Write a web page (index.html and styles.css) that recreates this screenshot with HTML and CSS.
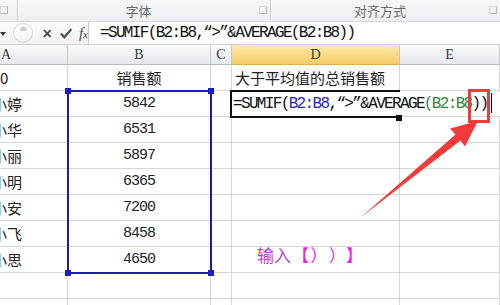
FILE: index.html
```html
<!DOCTYPE html>
<html lang="zh-CN">
<head>
  <meta charset="UTF-8" />
  <title>SUMIF</title>
  <link rel="stylesheet" href="styles.css">
</head>
<body>
  <div class="page">
    <div class="ribbon">
      <div class="grp grp-first"><span class="launch"></span></div>
      <div class="grp grp-font"><span class="grp-label">字体</span><span class="launch"></span></div>
      <div class="grp grp-align"><span class="grp-label">对齐方式</span><span class="launch"></span></div>
    </div>

    <div class="fbar">
      <div class="fbar-tools">
        <span class="nb-arrow"></span>
        <span class="grip"><span class="grip-dot"></span></span>
        <svg class="tool-x" width="9" height="9" viewBox="0 0 9 9"><path d="M1 1 L8 8 M8 1 L1 8" stroke="#4a4a4a" stroke-width="2"/></svg>
        <svg class="tool-ok" width="13" height="11" viewBox="0 0 13 11"><path d="M1 5.5 L4.5 9.5 L12 1" fill="none" stroke="#4a4a4a" stroke-width="2.2"/></svg>
        <span class="fx">f<i>x</i></span>
      </div>
      <div class="fbar-input">=SUMIF(B2:B8,“&gt;”&amp;AVERAGE(B2:B8))</div>
    </div>

    <div class="sheet">
      <div class="row hdr">
        <div class="c ca">A</div><div class="c cb">B</div><div class="c cc">C</div><div class="c cd on">D</div><div class="c ce">E</div>
      </div>
      <div class="row">
        <div class="c ca">0</div><div class="c cb">销售额</div><div class="c cc"></div><div class="c cd txt">大于平均值的总销售额</div><div class="c ce"></div>
      </div>
      <div class="row">
        <div class="c ca name">小婷</div><div class="c cb num">5842</div><div class="c cc"></div><div class="c cd"></div><div class="c ce"></div>
      </div>
      <div class="row">
        <div class="c ca name">小华</div><div class="c cb num">6531</div><div class="c cc"></div><div class="c cd"></div><div class="c ce"></div>
      </div>
      <div class="row">
        <div class="c ca name">小丽</div><div class="c cb num">5897</div><div class="c cc"></div><div class="c cd"></div><div class="c ce"></div>
      </div>
      <div class="row">
        <div class="c ca name">小明</div><div class="c cb num">6365</div><div class="c cc"></div><div class="c cd"></div><div class="c ce"></div>
      </div>
      <div class="row">
        <div class="c ca name">小安</div><div class="c cb num">7200</div><div class="c cc"></div><div class="c cd"></div><div class="c ce"></div>
      </div>
      <div class="row">
        <div class="c ca name">小飞</div><div class="c cb num">8458</div><div class="c cc"></div><div class="c cd"></div><div class="c ce"></div>
      </div>
      <div class="row">
        <div class="c ca name">小思</div><div class="c cb num">4650</div><div class="c cc"></div><div class="c cd"></div><div class="c ce"></div>
      </div>
      <div class="row">
        <div class="c ca"></div><div class="c cb"></div><div class="c cc"></div><div class="c cd"></div><div class="c ce"></div>
      </div>
      <div class="row">
        <div class="c ca"></div><div class="c cb"></div><div class="c cc"></div><div class="c cd"></div><div class="c ce"></div>
      </div>

      <!-- selection over B2:B8 -->
      <div class="range">
        <span class="hd hd-tl"></span><span class="hd hd-tr"></span>
        <span class="hd hd-bl"></span><span class="hd hd-br"></span>
      </div>

      <!-- active cell D2 in edit mode -->
      <div class="active"></div>
      <div class="editor">=SUMIF(<span class="ref1">B2:B8</span>,“&gt;”&amp;AVERAGE<span class="ref2">(B2:B8</span>))<span class="caret"></span></div>
      <span class="fill"></span>

      <div class="mark"></div>
      <div class="note">输入<span class="br br-open">【</span><span class="br br-p1">）</span><span class="br br-p2">）</span><span class="br br-close">】</span></div>
    </div>

    <svg class="arrow" width="500" height="305" viewBox="0 0 500 305">
      <polygon points="360,218 455.5,134.5 450,128.5 478,121 465,146.5 460.5,140.5" fill="#f23a3a"/>
    </svg>
  </div>
</body>
</html>
```

FILE: styles.css
```css
body {
  margin: 0;
  background: #fff;
  font-family: "Noto Sans CJK SC", sans-serif;
  color: #222;
}
.page {
  position: relative;
  width: 500px;
  height: 305px;
  overflow: hidden;
}

/* ribbon group labels */
.ribbon {
  display: flex;
  height: 21px;
  background: linear-gradient(#f7f8fa, #eceef1);
  border-bottom: 1px solid #d5d9de;
}
.grp {
  display: flex;
  align-items: flex-start;
  border-right: 1px solid #c8ccd2;
  box-shadow: 1px 0 0 #fff;
}
.grp-first { width: 17px; }
.grp-font { width: 252px; }
.grp-align { flex: 1; border-right: none; box-shadow: none; }
.grp-label {
  flex: 1;
  text-align: center;
  font-size: 13px;
  line-height: 21px;
  color: #6a6a6a;
}
.launch {
  width: 6px;
  height: 6px;
  margin: 6px 3px 0 0;
  border: 1px solid #b4b8be;
  border-left-color: #d4d7db;
  border-top-color: #d4d7db;
  flex: none;
}

/* formula bar */
.fbar {
  display: flex;
  height: 22px;
  border-bottom: 1px solid #cdd1d6;
  background: #fff;
}
.fbar-tools {
  width: 88px;
  display: flex;
  align-items: center;
  background: linear-gradient(#fbfbfc, #f1f2f4);
}
.nb-arrow {
  width: 0;
  height: 0;
  border-left: 3px solid transparent;
  border-right: 3px solid transparent;
  border-top: 4px solid #333;
  margin: 1px 0 0 0;
}
.grip {
  width: 19px;
  height: 18px;
  margin-left: 7px;
  border-radius: 50%;
  border: 1px solid #d9dce0;
  background: linear-gradient(#ffffff, #eef0f2);
  display: flex;
  justify-content: center;
}
.grip-dot {
  width: 7px;
  height: 4px;
  margin-top: 3px;
  border-radius: 50%;
  background: #c9ccd1;
}
.tool-x { margin-left: 10px; }
.tool-ok { margin-left: 8px; }
.fx {
  margin-left: 7px;
  font-family: "Liberation Serif", serif;
  font-style: italic;
  font-size: 15px;
  color: #4a4a4a;
}
.fx i { font-size: 11px; }
.fbar-input {
  flex: 1;
  border-left: 1px solid #c6cad0;
  padding-left: 11px;
  font-family: "Liberation Mono", monospace;
  font-size: 16px;
  letter-spacing: -1.65px;
  line-height: 22px;
  color: #111;
  white-space: nowrap;
}

/* sheet */
.sheet {
  position: relative;
}
.row {
  display: grid;
  grid-template-columns: 68px 143px 21px 168px 100px;
  height: 26px;
}
.c {
  box-sizing: border-box;
  border-right: 1px solid #d6d6d6;
  border-bottom: 1px solid #d6d6d6;
  font-size: 15px;
  line-height: 25px;
  text-align: center;
  white-space: nowrap;
  overflow: hidden;
}
.ca { text-align: left; }
.name { text-indent: -8px; }
.num {
  font-family: "Liberation Mono", monospace;
  letter-spacing: -1px;
}
.txt {
  text-align: left;
  padding-left: 3px;
  overflow: visible;
}

.hdr { height: 20px; }
.hdr .c {
  font-family: "Liberation Serif", serif;
  font-size: 14px;
  line-height: 19px;
  color: #3a3a3a;
  background: linear-gradient(#f9fafb, #e6e9ed);
  border-right-color: #c5c9ce;
  border-bottom-color: #b9bdc3;
}
.hdr .ca { padding-left: 1px; }
.hdr .on {
  background: linear-gradient(#fde8aa, #f6cd66);
  border-bottom-color: #e0b04a;
}

/* overlays */
.range {
  position: absolute;
  left: 67px;
  top: 45px;
  width: 141px;
  height: 180px;
  border: 2px solid #1c1cb4;
}
.hd {
  position: absolute;
  width: 6px;
  height: 6px;
  background: #1c1cc8;
}
.hd-tl { left: -4px; top: -4px; }
.hd-tr { right: -4px; top: -4px; }
.hd-bl { left: -4px; bottom: -4px; }
.hd-br { right: -4px; bottom: -4px; }

.active {
  position: absolute;
  left: 230px;
  top: 45px;
  width: 166px;
  height: 24px;
  border: 2px solid #111;
}
.editor {
  position: absolute;
  left: 232px;
  top: 47px;
  width: 267px;
  height: 24px;
  background: #fff;
  padding-left: 1px;
  font-family: "Liberation Mono", monospace;
  font-size: 16px;
  letter-spacing: -1.65px;
  line-height: 24px;
  color: #111;
  white-space: nowrap;
}
.ref1 { color: #2a2ab8; }
.ref2 { color: #2f8a3c; }
.caret {
  display: inline-block;
  width: 1px;
  height: 20px;
  margin-left: 4px;
  vertical-align: -5px;
  background: #111;
}
.fill {
  position: absolute;
  left: 396px;
  top: 70px;
  width: 6px;
  height: 6px;
  background: #111;
}
.mark {
  position: absolute;
  left: 468px;
  top: 44px;
  width: 16px;
  height: 28px;
  border: 3px solid #ef3b3b;
}
.note {
  position: absolute;
  left: 257px;
  top: 199px;
  display: flex;
  font-size: 17px;
  line-height: 22px;
  color: #c23dcc;
  white-space: nowrap;
}
.br {
  display: inline-block;
  color: #f01ef0;
}
.br-open { width: 18px; text-align: right; }
.br-p1 { width: 20px; text-align: center; }
.br-p2 { width: 16px; text-align: center; }
.br-close { width: 18px; text-align: right; }
.arrow {
  position: absolute;
  left: 0;
  top: 0;
}
```
